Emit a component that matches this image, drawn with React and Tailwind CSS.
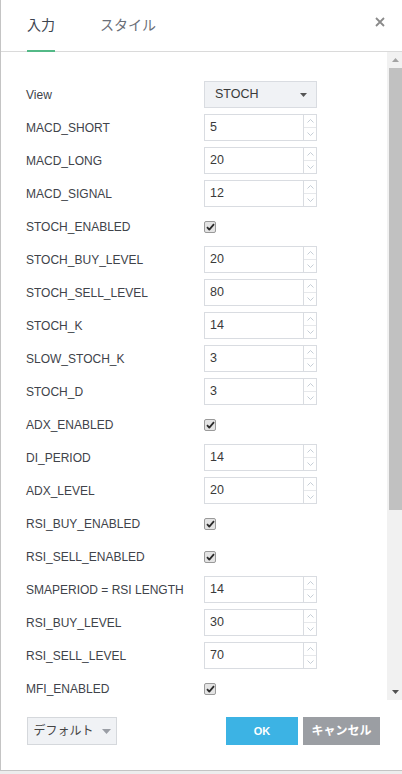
import React from "react";

const rows = [
  ["View", "select", "STOCH"],
  ["MACD_SHORT", "num", "5"],
  ["MACD_LONG", "num", "20"],
  ["MACD_SIGNAL", "num", "12"],
  ["STOCH_ENABLED", "check"],
  ["STOCH_BUY_LEVEL", "num", "20"],
  ["STOCH_SELL_LEVEL", "num", "80"],
  ["STOCH_K", "num", "14"],
  ["SLOW_STOCH_K", "num", "3"],
  ["STOCH_D", "num", "3"],
  ["ADX_ENABLED", "check"],
  ["DI_PERIOD", "num", "14"],
  ["ADX_LEVEL", "num", "20"],
  ["RSI_BUY_ENABLED", "check"],
  ["RSI_SELL_ENABLED", "check"],
  ["SMAPERIOD = RSI LENGTH", "num", "14"],
  ["RSI_BUY_LEVEL", "num", "30"],
  ["RSI_SELL_LEVEL", "num", "70"],
  ["MFI_ENABLED", "check"],
];

function Num({ value }) {
  return (
    <div className="flex h-[27px] w-[113px] border border-[#d9dce1] bg-white">
      <div className="flex flex-1 items-center pl-[5px] text-[12.5px] text-[#3a3a3a]">{value}</div>
      <div className="flex w-[13px] flex-col border-l border-[#d9dce1]">
        <div className="flex flex-1 items-center justify-center border-b border-[#e6e8eb]">
          <svg width="7" height="4" viewBox="0 0 7 4"><path d="M0.5 3.5 L3.5 0.5 L6.5 3.5" fill="none" stroke="#b8c2cc" strokeWidth="0.8" /></svg>
        </div>
        <div className="flex flex-1 items-center justify-center">
          <svg width="7" height="4" viewBox="0 0 7 4"><path d="M0.5 0.5 L3.5 3.5 L6.5 0.5" fill="none" stroke="#b8c2cc" strokeWidth="0.8" /></svg>
        </div>
      </div>
    </div>
  );
}

function Check() {
  return (
    <div className="flex h-[12px] w-[12px] items-center justify-center rounded-[2px] border border-[#9a9a9a] bg-[#e4e4e4]">
      <svg width="9" height="8" viewBox="0 0 9 8">
        <path d="M1 4.2 L3.3 6.6 L8 1.2" fill="none" stroke="#2b2b2b" strokeWidth="1.8" strokeLinejoin="round" />
      </svg>
    </div>
  );
}

function Select({ value }) {
  return (
    <div className="flex h-[27px] w-[113px] items-center justify-between border border-[#d9dce1] bg-[#f0f2f5] pl-[10px] pr-[9px] text-[12.5px] text-[#3a3a3a]">
      <span>{value}</span>
      <svg width="7" height="4" viewBox="0 0 7 4"><path d="M0 0 H7 L3.5 4 Z" fill="#555" /></svg>
    </div>
  );
}

export default function App() {
  return (
    <div className="h-[774px] w-[402px] bg-[#ededed]" style={{ fontFamily: '"Liberation Sans", "Noto Sans CJK JP", sans-serif' }}>
      <div className="flex h-[771px] flex-col border-b border-l border-[#c4c4c4] bg-white">
        {/* header */}
        <div className="relative flex h-[52px] shrink-0 border-b border-[#dadada] pl-[26px]">
          <div className="flex h-[51px] flex-col items-center justify-center">
            <div className="mt-[-1px] text-[14px] text-[#3d4450]">入力</div>
          </div>
          <div className="absolute bottom-[-1px] left-[26px] h-[2px] w-[28px] bg-[#53b987]" />
          <div className="ml-[45px] flex h-[51px] items-center">
            <div className="mt-[-1px] text-[14px] text-[#6a6f78]">スタイル</div>
          </div>
          <div className="absolute right-[17px] top-[17px]">
            <svg width="10" height="10" viewBox="0 0 10 10"><path d="M1 1 L9 9 M9 1 L1 9" stroke="#8a8a8a" strokeWidth="1.8" /></svg>
          </div>
        </div>
        {/* body */}
        <div className="flex h-[648px] shrink-0">
          <div className="flex-1 pl-[25px] pt-[26px]">
            {rows.map(([label, type, val]) => (
              <div key={label} className="flex h-[33px] items-center">
                <div className="w-[178px] text-[12px] text-[#40434a]">{label}</div>
                {type === "select" && <Select value={val} />}
                {type === "num" && <Num value={val} />}
                {type === "check" && <Check />}
              </div>
            ))}
          </div>
          {/* scrollbar */}
          <div className="flex w-[15px] flex-col bg-[#f1f1f1]">
            <div className="flex h-[16px] items-center justify-center pl-[1px]">
              <svg width="7" height="4" viewBox="0 0 7 4"><path d="M0 4 H7 L3.5 0 Z" fill="#a3a3a3" /></svg>
            </div>
            <div className="ml-[2px] h-[442px] bg-[#c1c1c1]" />
            <div className="flex-1" />
            <div className="flex h-[16px] items-center justify-center pl-[1px]">
              <svg width="7" height="4" viewBox="0 0 7 4"><path d="M0 0 H7 L3.5 4 Z" fill="#505050" /></svg>
            </div>
          </div>
        </div>
        {/* footer */}
        <div className="flex flex-1 items-start pl-[26px] pr-[22px] pt-[17px]">
          <div className="flex h-[28px] w-[90px] items-center justify-center gap-[8px] border border-[#d5d8dc] bg-[#f0f2f5] text-[12px] text-[#444]">
            <span>デフォルト</span>
            <svg width="9" height="5" viewBox="0 0 9 5"><path d="M0 0 H9 L4.5 5 Z" fill="#9a9ea5" /></svg>
          </div>
          <div className="flex-1" />
          <div className="flex h-[28px] w-[72px] items-center justify-center bg-[#3cb3e4] text-[11px] font-bold text-white">OK</div>
          <div className="ml-[5px] flex h-[28px] w-[77px] items-center justify-center bg-[#9b9ea3] text-[12px] font-bold text-white">キャンセル</div>
        </div>
      </div>
    </div>
  );
}
